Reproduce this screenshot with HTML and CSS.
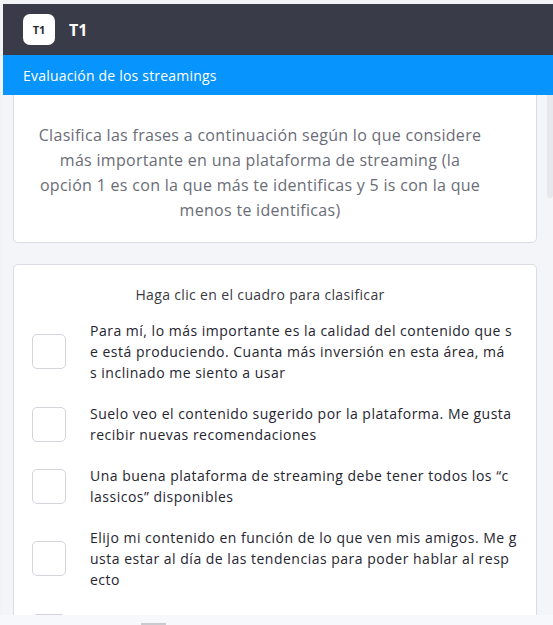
FILE: index.html
```html
<!DOCTYPE html>
<html lang="es">
<head>
<meta charset="utf-8">
<title>T1 - Evaluación de los streamings</title>
<link rel="stylesheet" href="styles.css">
</head>
<body>
<div class="app">
  <header class="topbar">
    <div class="logo">T1</div>
    <div class="brand">T1</div>
  </header>
  <div class="subbar">Evaluación de los streamings</div>
  <main class="content">
    <div class="scroll-thumb"></div>
    <section class="card intro">
      <p class="intro-text">Clasifica las frases a continuación según lo que considere<br>más importante en una plataforma de streaming (la<br>opción 1 es con la que más te identificas y 5 is con la que<br>menos te identificas)</p>
    </section>
    <section class="card rank">
      <h2 class="rank-title">Haga clic en el cuadro para clasificar</h2>
      <ul class="items">
        <li class="item"><span class="box"></span><span class="label">Para mí, lo más importante es la calidad del contenido que s<br>e está produciendo. Cuanta más inversión en esta área, má<br>s inclinado me siento a usar</span></li>
        <li class="item"><span class="box"></span><span class="label">Suelo veo el contenido sugerido por la plataforma. Me gusta<br>recibir nuevas recomendaciones</span></li>
        <li class="item"><span class="box"></span><span class="label">Una buena plataforma de streaming debe tener todos los “c<br>lassicos” disponibles</span></li>
        <li class="item"><span class="box"></span><span class="label">Elijo mi contenido en función de lo que ven mis amigos. Me g<br>usta estar al día de las tendencias para poder hablar al resp<br>ecto</span></li>
        <li class="item"><span class="box"></span><span class="label">Mi elección depende del precio y de si puedo verlo en todos<br>mis dispositivos</span></li>
      </ul>
    </section>
  </main>
  <footer class="bottombar"><span class="handle"></span></footer>
</div>
</body>
</html>
```
FILE: styles.css
```css
* { box-sizing: border-box; }
html, body {
  margin: 0;
  height: 100%;
  background: #f2f3f7;
  font-family: "Open Sans", "Noto Sans", sans-serif;
}
body { padding: 4px 0 0 3px; overflow: hidden; }
.app {
  height: 621px;
  display: flex;
  flex-direction: column;
  background: #f4f5f9;
}
.topbar {
  height: 51px;
  flex: none;
  background: #393c48;
  display: flex;
  align-items: center;
  padding-left: 20px;
  gap: 14px;
}
.logo {
  width: 32px;
  height: 31px;
  background: #fff;
  border-radius: 7px;
  display: flex;
  align-items: center;
  justify-content: center;
  font-size: 11px;
  font-weight: 700;
  color: #2a2a33;
}
.brand {
  color: #fff;
  font-size: 16px;
  font-weight: 700;
}
.subbar {
  height: 40px;
  flex: none;
  background: #0795fd;
  color: #fff;
  font-size: 14px;
  letter-spacing: 0.2px;
  padding-left: 20px;
  display: flex;
  align-items: center;
}
.content {
  flex: 1;
  position: relative;
  overflow: hidden;
  padding: 0 16px 0 10px;
}
.scroll-thumb {
  position: absolute;
  right: 0;
  top: 0;
  width: 6px;
  height: 103px;
  background: #e7e8ed;
  border-radius: 0 0 3px 3px;
}
.card {
  background: #fff;
  border: 1px solid #d9dce3;
  border-radius: 5px;
}
.intro {
  margin-top: -20px;
  padding: 47px 50px 19px 20px;
}
.intro-text {
  margin: 0;
  text-align: center;
  color: #6a6d77;
  font-size: 16px;
  letter-spacing: 0.3px;
  line-height: 25px;
}
.rank {
  margin-top: 21px;
  padding: 20px 16px 0 18px;
}
.rank-title {
  margin: 0 32px 15px 0;
  text-align: center;
  font-size: 14px;
  font-weight: 500;
  letter-spacing: 0.35px;
  line-height: 20px;
  color: #3a3a3f;
}
.items {
  list-style: none;
  margin: 0;
  padding: 0;
  display: flex;
  flex-direction: column;
  gap: 20px;
}
.item {
  display: flex;
  align-items: center;
  gap: 24px;
}
.box {
  flex: none;
  width: 34px;
  height: 35px;
  border: 1px solid #d3d5da;
  border-radius: 5px;
  background: #fff;
}
.label {
  flex: 1;
  font-size: 14px;
  letter-spacing: 0.5px;
  line-height: 21px;
  color: #252530;
  white-space: nowrap;
}
.bottombar {
  position: fixed;
  left: 0;
  right: 0;
  bottom: 0;
  height: 10px;
  background: #f7f8fc;
}
.handle {
  position: absolute;
  left: 141px;
  top: 8px;
  width: 25px;
  height: 2px;
  background: #c9cbd1;
}
```
